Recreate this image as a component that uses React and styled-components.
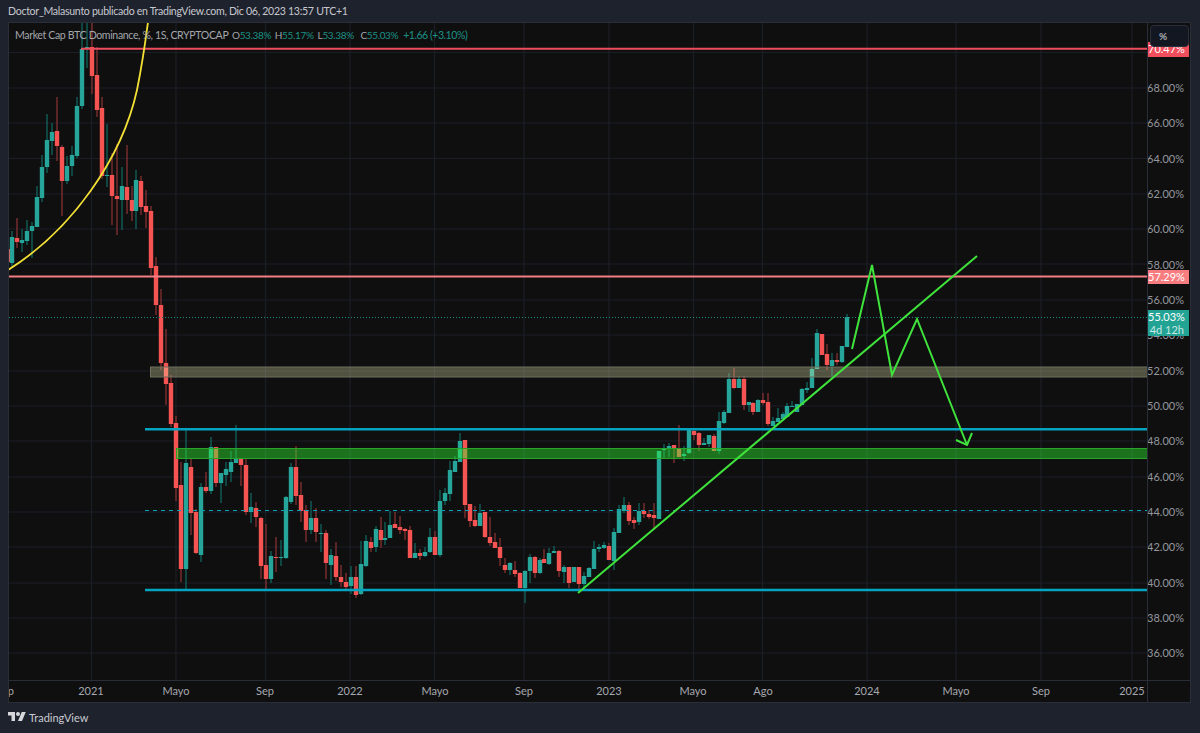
import React from 'react';
import styled, { createGlobalStyle } from 'styled-components';

const Global = createGlobalStyle`
  html, body { margin: 0; padding: 0; background: #1e222d; }
  #root { width: 1200px; height: 733px; overflow: hidden; }
`;

const Page = styled.div`
  width: 1200px;
  height: 733px;
  display: flex;
  flex-direction: column;
  padding: 0 9px 0 8px;
  box-sizing: border-box;
  background: #1e222d;
  font-family: Lato, "Liberation Sans", sans-serif;
`;
const Header = styled.div`
  height: 22px;
  flex: none;
  display: flex;
  align-items: center;
  font-size: 10.6px;
  letter-spacing: -0.3px;
  color: #c6c8cd;
  white-space: nowrap;
`;
const Frame = styled.div`
  flex: none;
  height: 681px;
  box-sizing: border-box;
  border: 1px solid #2a2e39;
  display: grid;
  grid-template-columns: 1138px 1fr;
  grid-template-rows: 657px 1fr;
  background: #0f0f10;
`;
const Pane = styled.div`
  position: relative;
  overflow: hidden;
`;
const ChartSvg = styled.svg`
  display: block;
`;
const Legend = styled.div`
  position: absolute;
  top: 4px;
  left: 6px;
  display: flex;
  align-items: center;
  height: 16px;
  font-size: 10.6px;
  color: #a3a6ab;
  white-space: nowrap;
`;
const LegendName = styled.span`
  width: 217px;
  letter-spacing: -0.38px;
`;
const LegendItem = styled.span`
  width: 42.8px;
  font-size: 10px;
  letter-spacing: -0.35px;
`;
const LegendValue = styled.span`
  color: #1b9284;
`;
const LegendChange = styled.span`
  color: #1b9284;
  letter-spacing: -0.5px;
`;
const PriceScale = styled.div`
  position: relative;
  border-left: 1px solid #2a2e39;
  padding-top: 47px;
  overflow: hidden;
`;
const Tick = styled.div`
  height: 35.33px;
  display: flex;
  align-items: center;
  justify-content: flex-end;
  padding-right: 6px;
  font-size: 11px;
  color: #94979d;
`;
const PercentButton = styled.div`
  position: absolute;
  top: 2px;
  left: 2px;
  width: 39px;
  height: 22px;
  box-sizing: border-box;
  border: 1px solid #2a2e39;
  border-radius: 4px;
  background: #131722;
  color: #a9acb5;
  font-size: 10px;
  font-weight: 700;
  line-height: 20px;
  padding-left: 8px;
  z-index: 2;
`;
const Badge = styled.div`
  position: absolute;
  left: 0;
  width: 41px;
  box-sizing: border-box;
  padding-right: 5px;
  text-align: right;
  font-size: 11px;
  line-height: 13px;
  color: #fff;
  background: ${p => p.$bg};
  top: ${p => p.$top}px;
  height: ${p => p.$h}px;
`;
const BadgeSub = styled.div`
  color: #c6e7e3;
`;
const TimeAxis = styled.div`
  position: relative;
  border-top: 1px solid #2a2e39;
  overflow: hidden;
`;
const TimeLabel = styled.span`
  position: absolute;
  top: 3px;
  transform: translateX(-50%);
  font-size: 11px;
  color: #a5a8ae;
`;
const Corner = styled.div`
  border-top: 1px solid #2a2e39;
  border-left: 1px solid #2a2e39;
`;
const Footer = styled.div`
  flex: 1;
  display: flex;
  align-items: center;
  gap: 3px;
  color: #c9cbd0;
  font-size: 11px;
  padding-bottom: 2px;
`;

const C = [
[8,249,262,248,262,'r'],[12,237,263,231,267,'g'],[17,238,242,218,248,'r'],[22,240,243,229,252,'g'],[27,231,241,220,245,'g'],[32,226,231,222,258,'g'],[37,197,227,186,227,'g'],[42,167,198,155,202,'g'],[47,140,167,114,173,'g'],[52,132,141,123,155,'g'],[57,131,146,97,161,'r'],[62,147,181,145,216,'r'],[67,166,181,156,184,'g'],[72,155,166,146,176,'g'],[77,106,156,97,158,'g'],[82,49,106,20,109,'g'],[87,47,49,20,68,'g'],[92,47,76,20,94,'r'],[97,75,110,47,117,'r'],[102,108,176,97,179,'r'],[107,175,176,124,187,'g'],[112,175,196,153,225,'r'],[117,196,199,144,235,'r'],[122,186,200,167,230,'g'],[127,187,200,145,214,'r'],[132,200,211,186,221,'r'],[136,180,211,170,229,'g'],[141,181,207,176,215,'r'],[146,206,212,190,228,'r'],[151,211,268,206,275,'r'],[156,266,305,257,315,'r'],[161,305,363,289,370,'r'],[166,363,384,329,405,'r'],[171,383,424,375,427,'r'],[176,423,488,416,501,'r'],[181,485,569,462,582,'r'],[186,463,569,430,589,'g'],[191,467,513,458,535,'r'],[196,512,553,509,554,'r'],[201,487,555,483,562,'g'],[206,487,491,472,493,'r'],[211,447,491,437,494,'g'],[216,447,483,447,487,'r'],[221,473,483,473,503,'g'],[226,469,475,462,486,'g'],[231,462,472,451,482,'g'],[236,458,463,425,463,'g'],[241,458,465,458,486,'r'],[246,465,512,458,515,'r'],[251,507,512,493,523,'g'],[256,508,517,502,527,'r'],[261,518,566,517,579,'r'],[266,565,579,524,590,'r'],[271,556,579,551,583,'g'],[276,557,558,537,572,'r'],[281,557,558,540,566,'g'],[286,497,558,496,559,'g'],[291,467,502,463,504,'g'],[296,467,496,446,505,'r'],[301,495,511,482,522,'r'],[306,510,530,505,542,'r'],[311,518,530,501,534,'g'],[316,518,532,508,542,'r'],[321,533,534,524,552,'g'],[326,533,563,530,579,'r'],[331,555,565,549,585,'g'],[336,556,577,542,581,'r'],[341,577,582,565,587,'r'],[346,582,587,573,589,'r'],[351,577,586,566,594,'g'],[356,577,595,566,598,'r'],[361,564,594,541,595,'g'],[366,541,566,535,567,'g'],[371,542,548,537,552,'r'],[376,529,547,526,552,'g'],[381,530,540,517,548,'r'],[385,538,540,522,545,'g'],[390,525,538,511,538,'g'],[395,524,528,512,528,'r'],[400,527,530,516,534,'r'],[405,529,531,528,540,'r'],[410,530,558,526,558,'r'],[415,553,558,543,558,'g'],[420,553,556,549,560,'r'],[425,552,556,547,557,'g'],[430,537,552,528,553,'g'],[435,537,555,531,555,'r'],[440,501,555,490,557,'g'],[445,493,501,488,505,'g'],[450,470,494,461,501,'g'],[455,461,472,456,472,'g'],[460,441,462,433,462,'g'],[465,440,505,440,518,'r'],[470,504,521,504,527,'r'],[475,520,526,506,527,'r'],[480,513,526,504,526,'g'],[485,512,537,512,538,'r'],[490,537,543,517,546,'r'],[495,542,548,533,548,'r'],[500,547,558,538,566,'r'],[505,565,570,558,573,'r'],[510,563,570,562,575,'g'],[515,570,574,561,577,'r'],[520,573,588,572,588,'r'],[525,571,588,570,603,'g'],[530,557,571,554,583,'g'],[535,557,573,556,578,'r'],[540,560,573,558,574,'g'],[544,559,563,549,563,'r'],[549,553,564,548,565,'g'],[554,551,553,546,553,'g'],[559,551,571,550,577,'r'],[564,567,572,565,583,'g'],[569,567,583,567,588,'r'],[574,567,582,567,582,'g'],[579,567,584,567,590,'r'],[584,576,584,572,588,'g'],[589,568,577,567,577,'g'],[594,549,569,541,569,'g'],[599,547,549,544,552,'g'],[604,545,548,542,549,'g'],[609,546,560,543,560,'r'],[614,532,561,528,570,'g'],[619,509,533,505,533,'g'],[624,505,511,497,513,'g'],[629,505,521,502,525,'r'],[634,520,523,517,529,'r'],[639,511,522,503,525,'g'],[644,511,514,503,518,'r'],[649,514,517,510,519,'r'],[654,515,518,503,530,'r'],[659,451,519,451,519,'g'],[664,448,450,444,459,'g'],[669,446,448,443,457,'g'],[674,445,448,445,463,'r'],[679,448,457,425,457,'r'],[684,454,456,446,461,'g'],[689,430,453,428,454,'g'],[694,431,435,430,440,'r'],[699,433,445,432,451,'r'],[704,443,445,438,445,'g'],[709,435,444,435,447,'g'],[714,436,451,434,451,'r'],[719,421,451,412,454,'g'],[724,412,423,410,424,'g'],[729,379,413,373,413,'g'],[734,379,388,368,389,'r'],[739,379,388,376,388,'g'],[744,379,405,376,410,'r'],[749,402,405,402,412,'g'],[753,403,412,402,415,'r'],[758,400,412,399,412,'g'],[763,400,403,393,405,'r'],[768,402,424,393,426,'r'],[773,421,426,417,426,'g'],[778,418,422,408,422,'g'],[783,414,419,412,419,'g'],[787,406,417,403,417,'g'],[792,406,407,401,407,'g'],[797,404,412,404,412,'g'],[802,389,405,388,405,'g'],[807,388,390,382,393,'g'],[812,369,388,358,388,'g'],[817,333,369,329,369,'g'],[822,334,355,334,355,'r'],[827,354,365,344,370,'r'],[832,360,366,353,376,'g'],[837,360,362,353,365,'r'],[842,346,362,346,363,'g'],[847,317,347,314,347,'g']
];

const UP = '#26a69a';
const DOWN = '#f65353';
const UP_W = '#125f58';
const DOWN_W = '#7e2f30';
const GRID = '#1c1e26';
const GX = [91.5, 176, 265.5, 350, 434.5, 524, 609, 693.5, 762.5, 867, 956, 1041, 1132];
const GY = [52.5, 88, 123, 158.5, 194, 229, 264, 300, 335, 371, 406, 441, 477, 512, 547, 583, 618, 653];
const PRICES = ['68.00%','66.00%','64.00%','62.00%','60.00%','58.00%','56.00%','54.00%','52.00%','50.00%','48.00%','46.00%','44.00%','42.00%','40.00%','38.00%','36.00%'];
const TIMES = [[5,'Sep'],[91,'2021'],[176,'Mayo'],[265,'Sep'],[350,'2022'],[435,'Mayo'],[524,'Sep'],[609,'2023'],[693,'Mayo'],[763,'Ago'],[867,'2024'],[956,'Mayo'],[1041,'Sep'],[1132,'2025']];

const Chart = () => (
  <ChartSvg width="1138" height="657" viewBox="9 23 1138 657">
    {GX.map(x => <line key={x} x1={x} x2={x} y1="23" y2="680" stroke={GRID} strokeWidth="1.2" />)}
    {GY.map(y => <line key={y} x1="9" x2="1147" y1={y} y2={y} stroke={GRID} strokeWidth="1.2" />)}
    {C.map(([x, t, b, wt, wb, d]) => (
      <g key={x}>
        <line x1={x} x2={x} y1={wt} y2={wb} stroke={d === 'g' ? UP_W : DOWN_W} strokeWidth="1.4" />
        <rect x={x - 2.2} y={t} width="4.4" height={b - t} fill={d === 'g' ? UP : DOWN} />
      </g>
    ))}
    <line x1="9" x2="1147" y1="317.5" y2="317.5" stroke="#1f8a7f" strokeWidth="1" strokeDasharray="1 2" />
    <rect x="150.5" y="367" width="997" height="10" fill="rgba(238,238,175,0.3)" stroke="#6f6f5d" strokeWidth="1" />
    <rect x="176.5" y="448.5" width="971" height="10" fill="rgba(50,253,50,0.42)" stroke="#28a528" strokeWidth="1" />
    <line x1="81" x2="1147" y1="48.7" y2="48.7" stroke="#ec4e5e" strokeWidth="2" />
    <line x1="9" x2="1147" y1="276.5" y2="276.5" stroke="#f47f83" strokeWidth="2" />
    <line x1="145" x2="1147" y1="429.3" y2="429.3" stroke="#04a4c0" strokeWidth="2.4" />
    <line x1="145" x2="1147" y1="590" y2="590" stroke="#04a4c0" strokeWidth="2.4" />
    <line x1="145" x2="1147" y1="510.5" y2="510.5" stroke="#0ba0b8" strokeWidth="1.2" strokeDasharray="4 4" />
    <path d="M8 270 C 72 230 122 158 137 90 C 141 70 145 45 148 22" fill="none" stroke="#f3e035" strokeWidth="1.8" />
    <line x1="578" y1="593" x2="977" y2="256" stroke="#3fe33b" strokeWidth="2" />
    <polyline points="852,349 872,265 892,375 917,319 967,445" fill="none" stroke="#3fe33b" strokeWidth="2" strokeLinejoin="miter" />
    <polyline points="956,440 967,445 972,433" fill="none" stroke="#3fe33b" strokeWidth="2" />
  </ChartSvg>
);

const Logo = () => (
  <svg width="18" height="14" viewBox="0 0 36 28" fill="#d6d8dc">
    <path d="M14 22H7V11H0V4h14v18zM28 22h-8l7.5-18h8L28 22z" />
    <circle cx="20" cy="8" r="4" />
  </svg>
);

export default function App() {
  return (
    <Page>
      <Global />
      <Header>Doctor_Malasunto publicado en TradingView.com, Dic 06, 2023 13:57 UTC+1</Header>
      <Frame>
        <Pane>
          <Chart />
          <Legend>
            <LegendName>Market Cap BTC Dominance, %, 1S, CRYPTOCAP</LegendName>
            <LegendItem>O<LegendValue>53.38%</LegendValue></LegendItem>
            <LegendItem>H<LegendValue>55.17%</LegendValue></LegendItem>
            <LegendItem>L<LegendValue>53.38%</LegendValue></LegendItem>
            <LegendItem>C<LegendValue>55.03%</LegendValue></LegendItem>
            <LegendChange>+1.66 (+3.10%)</LegendChange>
          </Legend>
        </Pane>
        <PriceScale>
          <PercentButton>%</PercentButton>
          <Badge $bg="#f04d5d" $top={19} $h={15}>70.47%</Badge>
          {PRICES.map(p => <Tick key={p}>{p}</Tick>)}
          <Badge $bg="#f77c80" $top={247} $h={14}>57.29%</Badge>
          <Badge $bg="#22a394" $top={287} $h={26}>
            55.03%
            <BadgeSub>4d 12h</BadgeSub>
          </Badge>
        </PriceScale>
        <TimeAxis>
          {TIMES.map(([x, t]) => (
            <TimeLabel key={x} style={{ left: x - 9 }}>{t}</TimeLabel>
          ))}
        </TimeAxis>
        <Corner />
      </Frame>
      <Footer>
        <Logo />
        <span>TradingView</span>
      </Footer>
    </Page>
  );
}
